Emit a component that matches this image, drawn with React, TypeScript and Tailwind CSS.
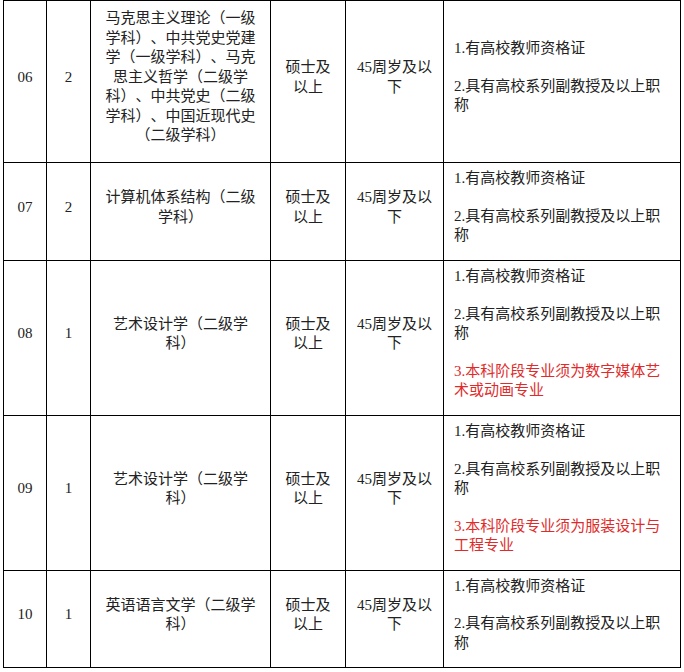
import React from 'react';

type Row = {
  no: string;
  count: string;
  subject: string[];
  height: number;
  notes: { lines: string[]; red?: boolean }[];
};

const base1 = { lines: ['1.有高校教师资格证'] };
const base2 = { lines: ['2.具有高校系列副教授及以上职', '称'] };

const rows: Row[] = [
  {
    no: '06',
    count: '2',
    subject: [
      '马克思主义理论（一级',
      '学科）、中共党史党建',
      '学（一级学科）、马克',
      '思主义哲学（二级学',
      '科）、中共党史（二级',
      '学科）、中国近现代史',
      '（二级学科）',
    ],
    height: 162,
    notes: [base1, base2],
  },
  {
    no: '07',
    count: '2',
    subject: ['计算机体系结构（二级', '学科）'],
    height: 98,
    notes: [base1, base2],
  },
  {
    no: '08',
    count: '1',
    subject: ['艺术设计学（二级学', '科）'],
    height: 155,
    notes: [base1, base2, { lines: ['3.本科阶段专业须为数字媒体艺', '术或动画专业'], red: true }],
  },
  {
    no: '09',
    count: '1',
    subject: ['艺术设计学（二级学', '科）'],
    height: 155,
    notes: [base1, base2, { lines: ['3.本科阶段专业须为服装设计与', '工程专业'], red: true }],
  },
  {
    no: '10',
    count: '1',
    subject: ['英语语言文学（二级学', '科）'],
    height: 97,
    notes: [base1, base2],
  },
];

const Lines = ({ lines }: { lines: string[] }) => (
  <>
    {lines.map((l, i) => (
      <div key={i}>{l}</div>
    ))}
  </>
);

export default function App() {
  const cell = 'border border-black align-middle text-center p-0 pb-2';
  return (
    <div
      className="w-[684px] h-[672px] bg-white text-[#222] text-[15px] leading-[19.5px] overflow-hidden [text-spacing-trim:space-all]"
      style={{ fontFamily: '"Liberation Serif", "Noto Sans CJK SC", serif' }}
    >
      <table className="ml-[3px] w-[677px] table-fixed border-collapse">
        <colgroup>
          <col className="w-[43px]" />
          <col className="w-[44px]" />
          <col className="w-[180px]" />
          <col className="w-[75px]" />
          <col className="w-[98px]" />
          <col className="w-[237px]" />
        </colgroup>
        <tbody>
          {rows.map((r) => (
            <tr key={r.no} style={{ height: r.height }}>
              <td className={cell}>{r.no}</td>
              <td className={cell}>{r.count}</td>
              <td className={cell}>
                <Lines lines={r.subject} />
              </td>
              <td className={cell}>
                <Lines lines={['硕士及', '以上']} />
              </td>
              <td className={cell}>
                <Lines lines={['45周岁及以', '下']} />
              </td>
              <td className="border border-black align-middle text-left pl-[10px] pr-1 pb-2">
                <div className="flex flex-col gap-[18px]">
                  {r.notes.map((n, i) => (
                    <div key={i} className={n.red ? 'text-[#e02b2b]' : ''}>
                      <Lines lines={n.lines} />
                    </div>
                  ))}
                </div>
              </td>
            </tr>
          ))}
        </tbody>
      </table>
    </div>
  );
}
